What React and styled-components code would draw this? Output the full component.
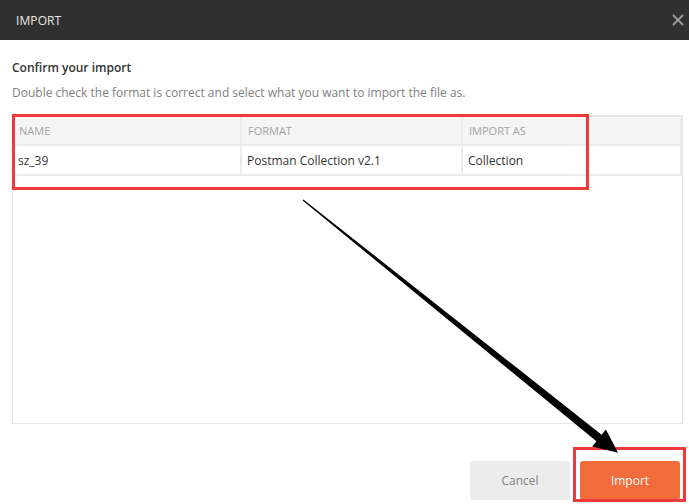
import React from "react";
import styled, { createGlobalStyle } from "styled-components";

const Global = createGlobalStyle`
  html, body { margin: 0; padding: 0; background: #ffffff; }
  body { font-family: "Open Sans", "Noto Sans", "Liberation Sans", sans-serif; }
  * { box-sizing: border-box; }
`;

const Page = styled.div`
  position: relative;
  width: 689px;
  height: 504px;
  overflow: hidden;
  background: #ffffff;
`;

const TitleBar = styled.header`
  height: 40px;
  background: #303030;
  display: flex;
  align-items: center;
  justify-content: space-between;
  padding: 0 5px 0 16px;
`;

const TitleText = styled.span`
  color: #e6e6e6;
  font-size: 12px;
  letter-spacing: 0.1px;
`;

const CloseIcon = styled.svg`
  width: 12px;
  height: 12px;
  display: block;
`;

const Content = styled.main`
  padding: 19px 6px 0 12px;
`;

const Heading = styled.h2`
  margin: 0;
  font-size: 12px;
  font-weight: 600;
  line-height: 18px;
  color: #333333;
`;

const Description = styled.p`
  margin: 7px 0 0;
  font-size: 12px;
  line-height: 18px;
  color: #808080;
`;

const Table = styled.div`
  margin-top: 13px;
  height: 309px;
  border: 1px solid #e6e6e6;
  border-top: none;
`;

const Row = styled.div`
  display: grid;
  grid-template-columns: 229px 221px 1fr;
  height: ${(p) => (p.$head ? "31px" : "30px")};
  background: ${(p) => (p.$head ? "#f5f5f5" : "#ffffff")};
  border-top: ${(p) => (p.$head ? "2px solid #e8e8e8" : "none")};
  border-bottom: 2px solid #ebebeb;
  border-right: 2px solid #ebebeb;
`;

const Cell = styled.div`
  display: flex;
  align-items: center;
  padding-left: ${(p) => (p.$head ? "6px" : "5px")};
  border-right: ${(p) => (p.$last ? "none" : "2px solid #ebebeb")};
  font-size: ${(p) => (p.$head ? "11px" : "12px")};
  color: ${(p) => (p.$head ? "#a3a3a3" : "#333333")};
  text-transform: ${(p) => (p.$head ? "uppercase" : "none")};
  white-space: nowrap;
`;

const Footer = styled.footer`
  display: flex;
  justify-content: flex-end;
  gap: 10px;
  padding: 37px 9px 0 0;
`;

const Button = styled.button`
  width: 100px;
  height: 39px;
  border: none;
  border-radius: 3px;
  font-family: inherit;
  font-size: 12px;
  background: ${(p) => (p.$primary ? "#f26b3a" : "#ececec")};
  color: ${(p) => (p.$primary ? "#ffffff" : "#808080")};
  cursor: pointer;
`;

const Annotations = styled.svg`
  position: absolute;
  left: 0;
  top: 0;
  width: 689px;
  height: 504px;
  pointer-events: none;
`;

const columns = ["Name", "Format", "Import as"];
const rows = [["sz_39", "Postman Collection v2.1", "Collection"]];

export default function App() {
  // arrow geometry
  const sx = 303, sy = 200;
  const bx = 599, by = 438;
  const dx = bx - sx, dy = by - sy;
  const len = Math.hypot(dx, dy);
  const ux = dx / len, uy = dy / len;
  const px = -uy, py = ux;
  const hw = 4.2, wing = 11, head = 22;
  const pts = [
    [sx - px * 0.6, sy - py * 0.6],
    [sx + px * 0.6, sy + py * 0.6],
    [bx + px * hw, by + py * hw],
    [bx + px * wing, by + py * wing],
    [bx + ux * head + 2, by + uy * head + 1],
    [bx - px * wing, by - py * wing],
    [bx - px * hw, by - py * hw],
  ]
    .map((p) => p.map((v) => v.toFixed(1)).join(","))
    .join(" ");

  return (
    <Page>
      <Global />
      <TitleBar>
        <TitleText>IMPORT</TitleText>
        <CloseIcon viewBox="0 0 12 12">
          <path d="M1 1 L11 11 M11 1 L1 11" stroke="#9a9a9a" strokeWidth="1.8" />
        </CloseIcon>
      </TitleBar>
      <Content>
        <Heading>Confirm your import</Heading>
        <Description>
          Double check the format is correct and select what you want to import the file as.
        </Description>
        <Table>
          <Row $head>
            {columns.map((c, i) => (
              <Cell key={c} $head $last={i === columns.length - 1}>
                {c}
              </Cell>
            ))}
          </Row>
          {rows.map((r, ri) => (
            <Row key={ri}>
              {r.map((c, i) => (
                <Cell key={i} $last={i === r.length - 1}>
                  {c}
                </Cell>
              ))}
            </Row>
          ))}
        </Table>
      </Content>
      <Footer>
        <Button>Cancel</Button>
        <Button $primary>Import</Button>
      </Footer>
      <Annotations viewBox="0 0 689 504">
        <rect x="13.5" y="115.5" width="574" height="73" fill="none" stroke="#f03a3a" strokeWidth="3" />
        <rect x="574.5" y="448.5" width="110" height="52" fill="none" stroke="#f03a3a" strokeWidth="3" />
        <polygon points={pts} fill="#000" />
      </Annotations>
    </Page>
  );
}
